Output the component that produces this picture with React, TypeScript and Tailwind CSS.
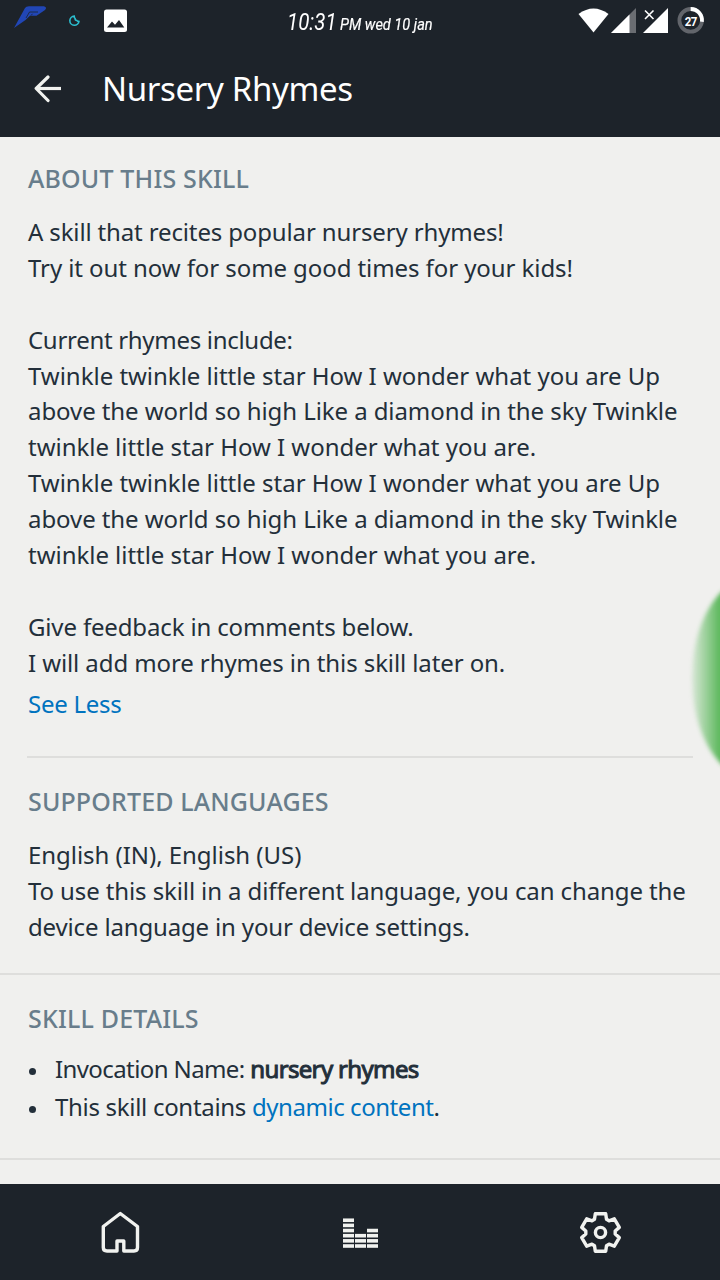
import React from 'react';

/** Lines of the skill description; an empty string is a blank row. */
const DESCRIPTION = [
  { text: 'A skill that recites popular nursery rhymes!', tracking: 'tracking-[-0.14px]' },
  { text: 'Try it out now for some good times for your kids!', tracking: 'tracking-[-0.08px]' },
  { text: '', tracking: '' },
  { text: 'Current rhymes include:', tracking: 'tracking-[-0.3px]' },
  { text: 'Twinkle twinkle little star How I wonder what you are Up', tracking: 'tracking-[-0.02px]' },
  { text: 'above the world so high Like a diamond in the sky Twinkle', tracking: 'tracking-[-0.08px]' },
  { text: 'twinkle little star How I wonder what you are.', tracking: 'tracking-[-0.03px]' },
  { text: 'Twinkle twinkle little star How I wonder what you are Up', tracking: 'tracking-[-0.02px]' },
  { text: 'above the world so high Like a diamond in the sky Twinkle', tracking: 'tracking-[-0.08px]' },
  { text: 'twinkle little star How I wonder what you are.', tracking: 'tracking-[-0.03px]' },
  { text: '', tracking: '' },
  { text: 'Give feedback in comments below.', tracking: 'tracking-[-0.15px]' },
  { text: 'I will add more rhymes in this skill later on.', tracking: 'tracking-[-0.1px]' },
];

const LANGUAGES = [
  { text: 'English (IN), English (US)', tracking: 'tracking-[-0.04px]' },
  { text: 'To use this skill in a different language, you can change the', tracking: 'tracking-[-0.11px]' },
  { text: 'device language in your device settings.', tracking: 'tracking-[-0.16px]' },
];

/** Equalizer columns: left edge and number of bars. */
const EQ_COLUMNS = [
  { x: 0, bars: 6 },
  { x: 12, bars: 3 },
  { x: 24, bars: 4 },
];

const TextLines: React.FC<{ lines: { text: string; tracking: string }[] }> = ({ lines }) => (
  <div className="text-[24px] leading-[35.9px] whitespace-nowrap">
    {lines.map((line, i) => (
      <p key={i} className={`h-[35.9px] ${line.tracking}`}>
        {line.text}
      </p>
    ))}
  </div>
);

const StatusBar: React.FC = () => (
  <div className="relative flex h-[45px] items-start justify-between">
    <svg width="135" height="40" viewBox="0 0 135 40">
      <path
        d="M14 28 L25 8 Q26 6.3 29 6.3 H44 Q47.5 7.5 45 10 L36.5 15.8 H30 L25.5 20 Z"
        fill="#2146b5"
      />
      <path d="M26 18 L29.5 12 H38 M31 15.5 L32.5 13.8" fill="none" stroke="#1d232a" strokeWidth="0.8" />
      <path
        d="M74.3 16.1 A4.6 4.6 0 1 0 79 21.2 Q77.5 21.8 76.8 20.4 Q74.9 20.4 75.2 18.6 Q73.9 17.6 74.3 16.1 Z"
        fill="none"
        stroke="#2bbfd0"
        strokeWidth="1.6"
        strokeLinejoin="round"
      />
      <rect x="104" y="9.5" width="23" height="22.5" rx="2.5" fill="#fff" />
      <path d="M107 27.5 L112 21.5 L115 24.8 L119 20 L124.3 27.5 Z" fill="#1d232a" />
    </svg>
    <div className="absolute top-[7px] left-[287px] flex origin-left scale-x-[0.855] items-baseline font-['Roboto'] leading-[30px] whitespace-nowrap text-white italic">
      <span className="w-[62px] text-[24px]">10:31</span>
      <span className="text-[17px] [-webkit-text-stroke:0.2px_white]">PM wed 10 jan</span>
    </div>
    <svg width="150" height="45" viewBox="570 0 150 45">
      <path d="M578.5 14 Q593.5 3 608.5 14 L593.5 32.5 Z" fill="#fff" />
      <path d="M611 33 L636 8 V33 Z" fill="#6a6d72" />
      <path d="M611 33 L629.5 14.5 V33 Z" fill="#fff" />
      <path d="M643 33 L668 8 V33 Z" fill="#fff" />
      <path d="M645 10.5 L653.5 19 M653.5 10.5 L645 19" stroke="#1d232a" strokeWidth="4" />
      <path d="M645 10.5 L653.5 19 M653.5 10.5 L645 19" stroke="#fff" strokeWidth="1.6" />
      <circle cx="690.7" cy="20.3" r="11.3" fill="none" stroke="#62656b" strokeWidth="3.8" />
      <path d="M690.7 9 A11.3 11.3 0 0 1 701.9 21.7" fill="none" stroke="#fff" strokeWidth="3.8" />
      <text
        x="812.8"
        y="26.4"
        textAnchor="middle"
        fill="#fff"
        transform="scale(0.85 1)"
        className="font-['Roboto'] text-[13.5px] font-bold tracking-[-0.4px]"
      >
        27
      </text>
    </svg>
  </div>
);

const SectionTitle: React.FC<{ children: React.ReactNode; className: string }> = ({ children, className }) => (
  <h2 className={`h-[36px] text-[25px] leading-[36px] font-medium whitespace-nowrap text-[#687d8b] ${className}`}>
    {children}
  </h2>
);

const BottomNav: React.FC = () => (
  <nav className="grid h-[96px] grid-cols-3 bg-[#1d232a]">
    <a className="flex justify-center pt-[6px]">
      <svg width="80" height="80" viewBox="0 0 80 80" fill="none" stroke="#f1f2ef" strokeWidth="3.4" strokeLinejoin="round">
        <path d="M40.3 23.5 L57.5 36.5 V57.5 Q57.5 61 54 61 H43.8 V51 H37 V61 H27 Q23.3 61 23.3 57.5 V36.5 Z" />
      </svg>
    </a>
    <a className="flex justify-center pt-[6px]">
      <svg width="80" height="80" viewBox="0 0 80 80">
        {EQ_COLUMNS.map((col) =>
          Array.from({ length: col.bars }, (_, i) => (
            <rect key={`${col.x}-${i}`} x={23 + col.x} y={54.2 - i * 5.15} width="11" height="3.6" fill="#f1f2ef" />
          ))
        )}
      </svg>
    </a>
    <a className="flex justify-center pt-[6px]">
      <svg width="80" height="80" viewBox="0 0 80 80" fill="none" stroke="#f1f2ef" strokeWidth="3.4" strokeLinejoin="round">
        <path d="M35.3 23.8 H45.7 L46.5 29.3 L49 30.8 L54.3 28.8 L59.3 37.4 L55.2 41 V44 L59.3 47.6 L54.3 56.2 L49 54.2 L46.5 55.7 L45.7 61.2 H35.3 L34.5 55.7 L32 54.2 L26.7 56.2 L21.7 47.6 L25.8 44 V41 L21.7 37.4 L26.7 28.8 L32 30.8 L34.5 29.3 Z" />
        <circle cx="40.5" cy="42.5" r="5.1" />
      </svg>
    </a>
  </nav>
);

export default function App() {
  return (
    <div className="relative flex h-[1280px] w-[720px] flex-col overflow-hidden bg-[#f0f0ee] font-['Noto_Sans',sans-serif] text-[#232f3a]">
      <header className="h-[137px] bg-[#1d232a]">
        <StatusBar />
        <div className="flex h-[88px] items-center pl-[34px]">
          <svg width="28" height="28" viewBox="0 0 28 28" fill="none" stroke="#f1f2ef" strokeWidth="3.2">
            <path d="M14 2 L2.2 13.5 L14 25.5" strokeLinecap="round" strokeLinejoin="round" />
            <path d="M2.5 13.5 H27" />
          </svg>
          <h1 className="pl-[40px] text-[33px] leading-[44px] tracking-[-0.35px] whitespace-nowrap text-white">
            Nursery Rhymes
          </h1>
        </div>
      </header>

      <main className="h-[1047px]">
        <section className="mx-[27px] h-[621px] border-b-2 border-[#dededc] pt-[23px] pl-px">
          <SectionTitle className="mb-[18px] tracking-[0.17px]">ABOUT THIS SKILL</SectionTitle>
          <TextLines lines={DESCRIPTION} />
          <a className="mt-[5px] block text-[24px] leading-[36px] tracking-[-0.25px] text-[#0073bf]">See Less</a>
        </section>

        <section className="h-[217px] border-b-2 border-[#dededc] pt-[25px] pl-[28px]">
          <SectionTitle className="mb-[18px] tracking-[0.14px]">SUPPORTED LANGUAGES</SectionTitle>
          <TextLines lines={LANGUAGES} />
        </section>

        <section className="h-[185px] border-b-2 border-[#dededc] pt-[25px] pl-[28px]">
          <SectionTitle className="mb-[14px] tracking-[0.18px]">SKILL DETAILS</SectionTitle>
          <ul className="text-[24px] leading-[38px] whitespace-nowrap">
            <li className="flex h-[38px] items-center">
              <i className="mt-[4px] mr-[19px] ml-px size-[7px] rounded-full bg-[#232f3a]" />
              <span className="tracking-[-0.6px]">
                Invocation Name:{' '}
                <b className="font-normal tracking-[-0.65px] [-webkit-text-stroke:1px_#232f3a]">nursery rhymes</b>
              </span>
            </li>
            <li className="flex h-[38px] items-center">
              <i className="mt-[4px] mr-[19px] ml-px size-[7px] rounded-full bg-[#232f3a]" />
              <span className="tracking-[-0.3px]">
                This skill contains <a className="tracking-[-0.45px] text-[#0073bf]">dynamic content</a>.
              </span>
            </li>
          </ul>
        </section>
      </main>

      <BottomNav />

      {/* floating edge handle */}
      <div className="absolute top-[575px] left-[688px] h-[206px] w-[32px] overflow-hidden">
        <div className="mt-[3px] ml-[4px] h-[200px] w-[120px] rounded-[50%] bg-linear-to-r from-[#5cb85c]/15 to-[#5cb85c] to-[28px] blur-[2px]" />
      </div>
    </div>
  );
}
